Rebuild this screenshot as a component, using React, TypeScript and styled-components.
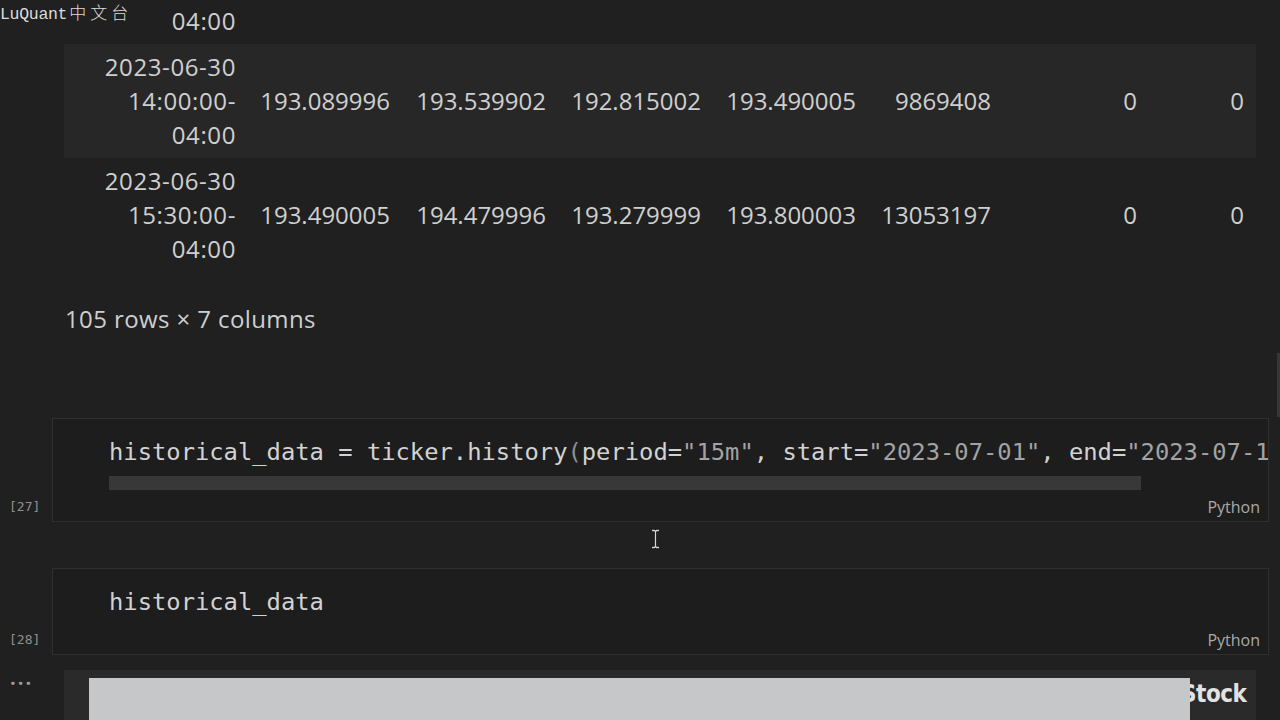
import React from "react";
import styled, { createGlobalStyle } from "styled-components";

const Global = createGlobalStyle`
  html, body { margin: 0; padding: 0; background: #202020; }
  body { font-family: "Open Sans", "Noto Sans", sans-serif; }
`;

const Page = styled.div`
  position: relative;
  width: 1280px;
  height: 720px;
  overflow: hidden;
  background: #202020;
  color: #cfcfcf;
`;

const Watermark = styled.div`
  position: absolute;
  top: 2px;
  left: 0;
  z-index: 5;
  line-height: 20px;
  color: #dcdcdc;
  white-space: nowrap;
`;

const Latin = styled.span`
  font-family: "Liberation Mono", "DejaVu Sans Mono", monospace;
  font-size: 16.5px;
  letter-spacing: -0.3px;
`;

const Cjk = styled.span`
  font-family: "Noto Sans CJK SC", sans-serif;
  font-size: 17px;
  font-weight: 300;
  letter-spacing: 4px;
  margin-left: 2px;
`;

const TableOut = styled.div`
  margin: -70px 0 0 64px;
  width: 1192px;
`;

const Row = styled.div<{ $hl?: boolean }>`
  display: grid;
  grid-template-columns: 172px 154px 156px 155px 155px 135px 146px 107px;
  align-items: center;
  height: 114px;
  background: ${(p) => (p.$hl ? "#272727" : "transparent")};
  font-size: 24px;
  line-height: 34px;
`;

const Cell = styled.div<{ $index?: boolean }>`
  text-align: right;
  white-space: nowrap;
  letter-spacing: ${(p) => (p.$index ? "0.6px" : "0")};
`;

const Summary = styled.div`
  margin: 30px 0 0 65px;
  font-size: 24px;
  line-height: 34px;
  letter-spacing: 0.4px;
  color: #cfcfcf;
`;

const Section = styled.div<{ $top: number }>`
  display: flex;
  margin-top: ${(p) => p.$top}px;
`;

const Gutter = styled.div`
  width: 52px;
  flex: none;
  display: flex;
  flex-direction: column;
  justify-content: flex-end;
  padding: 0 0 5px 9px;
  box-sizing: border-box;
`;

const ExecCount = styled.div`
  font-family: "DejaVu Sans Mono", monospace;
  font-size: 13px;
  line-height: 20px;
  color: #909090;
`;

const CellBox = styled.div`
  width: 1217px;
  box-sizing: border-box;
  border: 1px solid #2f2f2f;
  background: #1d1d1d;
  padding: 16px 8px 4px 56px;
  overflow: hidden;
`;

const CodeLine = styled.div`
  font-family: "DejaVu Sans Mono", "Liberation Mono", monospace;
  font-size: 23.8px;
  line-height: 34px;
  white-space: pre;
  color: #d2d2d2;
`;

const Tok = styled.span<{ $c: string }>`
  color: ${(p) => p.$c};
`;

const ScrollBar = styled.div`
  margin-top: 7px;
  width: 1032px;
  height: 14px;
  background: #383838;
`;

const Footer = styled.div<{ $gap: number }>`
  margin-top: ${(p) => p.$gap}px;
  text-align: right;
  font-size: 16px;
  line-height: 20px;
  color: #a9a9a9;
`;

const OutGutter = styled.div`
  width: 52px;
  flex: none;
  padding: 0 0 0 10px;
  box-sizing: border-box;
  font-size: 20px;
  font-weight: 700;
  line-height: 16px;
  letter-spacing: 2px;
  color: #9a9a9a;
`;

const OutputPanel = styled.div`
  margin-left: 12px;
  width: 1192px;
  height: 60px;
  box-sizing: border-box;
  padding: 8px 0 0 25px;
  background: #2a2a2a;
  display: flex;
  align-items: flex-start;
`;

const LightBox = styled.div`
  position: relative;
  z-index: 1;
  width: 1101px;
  height: 60px;
  flex: none;
  background: #c6c7c9;
`;

const StockLabel = styled.div`
  margin: 1px 0 0 -9px;
  font-family: "DejaVu Sans Condensed", "DejaVu Sans", sans-serif;
  font-weight: 700;
  font-size: 24px;
  line-height: 30px;
  letter-spacing: -0.5px;
  color: #e2e2e2;
`;

const Thumb = styled.div`
  position: absolute;
  right: 0;
  top: 353px;
  width: 3px;
  height: 64px;
  background: #363636;
`;

const Cursor = styled.svg`
  position: absolute;
  left: 650px;
  top: 529px;
`;

type RowData = { idx: string[]; vals: string[] };

const rows: RowData[] = [
  {
    idx: ["2023-06-30", "12:30:00-", "04:00"],
    vals: ["192.854996", "193.119995", "192.690002", "193.089996", "7036352", "0", "0"],
  },
  {
    idx: ["2023-06-30", "14:00:00-", "04:00"],
    vals: ["193.089996", "193.539902", "192.815002", "193.490005", "9869408", "0", "0"],
  },
  {
    idx: ["2023-06-30", "15:30:00-", "04:00"],
    vals: ["193.490005", "194.479996", "193.279999", "193.800003", "13053197", "0", "0"],
  },
];

const W = "#d2d2d2";
const S = "#a3a3a3";
const B = "#8f8f8f";

export default function App() {
  return (
    <Page>
      <Global />
      <Watermark>
        <Latin>LuQuant</Latin>
        <Cjk>中文台</Cjk>
      </Watermark>

      <TableOut>
        {rows.map((r, i) => (
          <Row key={i} $hl={i === 1}>
            <Cell $index>
              {r.idx.map((l) => (
                <div key={l}>{l}</div>
              ))}
            </Cell>
            {r.vals.map((v, j) => (
              <Cell key={j}>{v}</Cell>
            ))}
          </Row>
        ))}
      </TableOut>

      <Summary>105 rows × 7 columns</Summary>

      <Section $top={82}>
        <Gutter>
          <ExecCount>[27]</ExecCount>
        </Gutter>
        <CellBox>
          <CodeLine>
            <Tok $c={W}>historical_data = ticker.history</Tok>
            <Tok $c={B}>(</Tok>
            <Tok $c={W}>period=</Tok>
            <Tok $c={S}>"15m"</Tok>
            <Tok $c={W}>, start=</Tok>
            <Tok $c={S}>"2023-07-01"</Tok>
            <Tok $c={W}>, end=</Tok>
            <Tok $c={S}>"2023-07-10"</Tok>
            <Tok $c={W}>, interval=</Tok>
            <Tok $c={S}>"15m"</Tok>
            <Tok $c={B}>)</Tok>
          </CodeLine>
          <ScrollBar />
          <Footer $gap={7}>Python</Footer>
        </CellBox>
      </Section>

      <Section $top={46}>
        <Gutter>
          <ExecCount>[28]</ExecCount>
        </Gutter>
        <CellBox>
          <CodeLine>historical_data</CodeLine>
          <Footer $gap={11}>Python</Footer>
        </CellBox>
      </Section>

      <Section $top={15}>
        <OutGutter>...</OutGutter>
        <OutputPanel>
          <LightBox />
          <StockLabel>Stock</StockLabel>
        </OutputPanel>
      </Section>

      <Thumb />
      <Cursor width="11" height="20" viewBox="0 0 11 20">
        <path
          d="M2 1.5h2.5l1 1 1-1H9M5.5 2.5v15M2 18.5h2.5l1-1 1 1H9"
          fill="none"
          stroke="#111"
          strokeWidth="3"
        />
        <path
          d="M2 1.5h2.5l1 1 1-1H9M5.5 2.5v15M2 18.5h2.5l1-1 1 1H9"
          fill="none"
          stroke="#d8d8d8"
          strokeWidth="1.3"
        />
      </Cursor>
    </Page>
  );
}
